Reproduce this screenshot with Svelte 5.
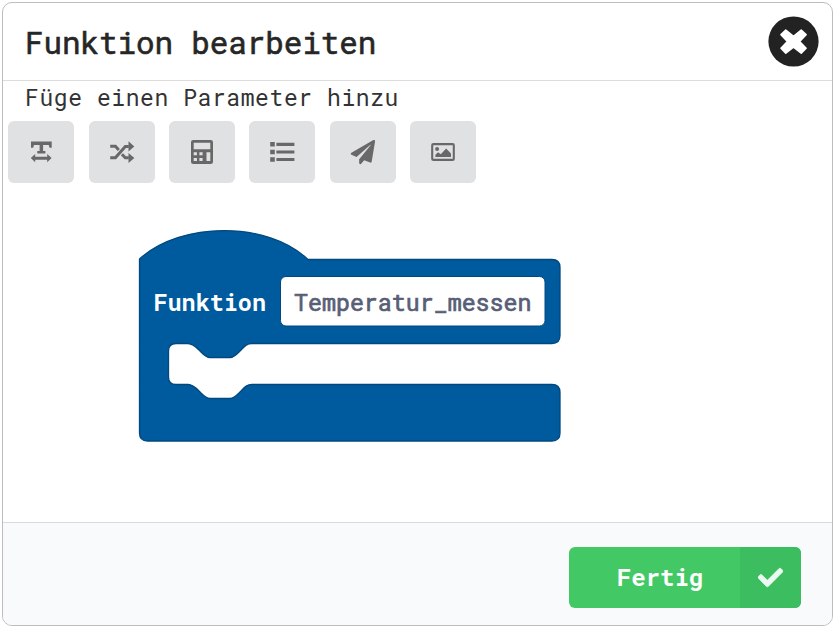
<script>
  const tools = ['text', 'random', 'calculator', 'list', 'plane', 'image'];
</script>

<div class="page">
  <section class="modal">
    <header>
      <h1>Funktion bearbeiten</h1>
      <button class="close" aria-label="Schließen">
        <svg width="51" height="51" viewBox="0 0 51 51">
          <circle cx="25.500" cy="25.500" r="25.100" fill="#222" />
          <path d="M17.800 14.100 25.500 20.300 33.200 14.100 38.100 18.700 31.600 25.500 38.100 32.300 33.200 37.200 25.500 31.100 17.800 37.200 13 32.300 19.400 25.500 13 18.700z" fill="#fff" stroke="#fff" stroke-width="1.600" stroke-linejoin="round" />
        </svg>
      </button>
    </header>

    <main>
      <p>Füge einen Parameter hinzu</p>
      <div class="tools">
        {#each tools as tool}
          <button class="tool" aria-label={tool}>
            <svg width="26" height="26" viewBox="0 0 26 26">
              {#if tool === 'text'}
                <path d="M3 2.500h20.700v6.300h-2.200L20.700 6h-5.600v6h2.300v2.500H9.300V12h2.300V6H6l-.8 2.800H3zM2.800 19.100 7.200 15v2.700h12V15l4.400 4.100-4.400 4.200v-2.600h-12v2.600z" />
              {:else if tool === 'random'}
                <path d="M1.200 7.200h5.200l3.400 3.700M1.200 18.800h5.200L16.300 7.500h3.500M12.900 15.300l3.400 3.500h3.500" class="line" />
                <path d="M19.500 2.300 25.300 7.500 19.500 12.500zM19.500 14l5.800 4.900-5.800 5z" />
              {:else if tool === 'calculator'}
                <path fill-rule="evenodd" d="M4.200 1h17.600q2.200 0 2.200 2.200v19.600q0 2.200-2.200 2.200H4.200Q2 25 2 22.800V3.200Q2 1 4.200 1zm.5 2.800v6.400h16.600V3.800zm0 9.500v3h3.200v-3zm5.700 0v3h3.200v-3zm-5.700 5.700v3h3.200v-3zm5.700 0v3h3.200v-3zm7.100-5.800V22h3.800v-8.800z" />
              {:else if tool === 'list'}
                <path d="M1.200 3h4.600v4.600H1.200zM1.200 10.700h4.600v4.600H1.200zM1.200 18.200h4.600v4.600H1.200zM7.400 3.800h18v3.100h-18zM7.400 11.400h18v3.100h-18zM7.400 18.900h18V22h-18z" />
              {:else if tool === 'plane'}
                <path transform="translate(.8 .9) scale(.0475)" d="M476 3.2 12.500 270.600c-18.100 10.400-15.800 35.600 2.200 43.200L121 358.400l287.300-253.200c5.500-4.900 13.300 2.600 8.600 8.300L176 407v80.500c0 23.600 28.500 32.900 42.500 15.800L282 426l124.600 52.200c14.200 6 30.400-2.900 33-18.200l72-432C515 7.800 493.300-6.800 476 3.200z" />
              {:else}
                <rect x="2.200" y="5.100" width="21.600" height="15.800" rx="1.200" fill="none" stroke="#686868" stroke-width="2.100" />
                <circle cx="7.100" cy="10" r="2" />
                <path d="M5.400 18.100v-2.300l2.700-2.600 2.700 2 5.300-5.800 4.900 5v3.700z" />
              {/if}
            </svg>
          </button>
        {/each}
      </div>

      <svg class="block" width="424" height="214" viewBox="138 229 424 214">
        <path
          d="M139.5 259C181 221 268 221 308 259.5H552Q560 259.5 560 267.5V335.500Q560 343.500 552 343.500H252C246 343.500 244 347 240 351C236 355 234 357.500 230 357.500H210C206 357.500 204 355 200 351C196 347 193 343.500 188 343.500H176Q168.500 343.500 168.500 351V377Q168.500 384.500 176 384.500H188C193 384.500 196 388 200 392C204 396 206 398.500 210 398.500H230C234 398.500 236 396 240 392C244 388 246 384.500 252 384.500H552Q560 384.500 560 392.500V433Q560 441 552 441H147.500Q139.500 441 139.500 433Z"
          fill="#005a9e" stroke="#00487e" stroke-width="1.3"
        />
        <rect x="280.5" y="276.500" width="264.500" height="49.500" rx="5.500" fill="#fff" stroke="#00487e" />
        <text x="153.500" y="310.500" fill="#fff" font-weight="700" textLength="112.500" lengthAdjust="spacingAndGlyphs">Funktion</text>
        <text x="294" y="310.500" fill="#575e75" stroke="#575e75" stroke-width=".7" textLength="237.500" lengthAdjust="spacingAndGlyphs">Temperatur_messen</text>
      </svg>
    </main>

    <footer>
      <button class="done">
        <span>Fertig</span>
        <i>
          <svg width="25" height="25" viewBox="0 0 512 512">
            <path fill="#eafaf0" stroke="#eafaf0" stroke-width="14" d="m173.898 439.404-166.400-166.400c-9.997-9.997-9.997-26.206 0-36.204l36.203-36.204c9.997-9.998 26.207-9.998 36.204 0L192 312.690 432.095 72.596c9.997-9.997 26.207-9.997 36.204 0l36.203 36.204c9.997 9.997 9.997 26.206 0 36.204l-294.400 294.401c-9.998 9.997-26.207 9.997-36.204-.001z" />
          </svg>
        </i>
      </button>
    </footer>
  </section>
</div>

<style>
  :global(body) {
    background: #fff;
  }
  .page {
    box-sizing: border-box;
    width: 835px;
    height: 628px;
    padding: 2px;
    font-family: 'Roboto Mono', 'DejaVu Sans Mono', monospace;
    overflow: hidden;
  }
  .modal {
    box-sizing: border-box;
    width: 831px;
    height: 624px;
    border: 1px solid #bdbdbd;
    border-radius: 10px;
    display: flex;
    flex-direction: column;
    overflow: hidden;
  }
  header {
    box-sizing: border-box;
    height: 78px;
    flex: none;
    display: flex;
    align-items: center;
    justify-content: space-between;
    padding: 0 13px 0 22px;
    border-bottom: 1px solid #dcdcdc;
  }
  h1 {
    margin: 0;
    font-size: 31px;
    font-weight: 400;
    line-height: 40px;
    letter-spacing: -0.12px;
    color: #262626;
    -webkit-text-stroke: 0.6px #262626;
    white-space: nowrap;
  }
  button {
    border: 0;
    padding: 0;
    font: inherit;
  }
  .close {
    background: none;
    display: flex;
  }
  main {
    flex: 1;
    display: flex;
    flex-direction: column;
  }
  p {
    margin: 1px 0 0 22px;
    height: 39px;
    line-height: 30px;
    font-size: 23px;
    letter-spacing: 0.58px;
    color: #333;
    white-space: nowrap;
  }
  .tools {
    display: flex;
    gap: 14.4px;
    margin-left: 5.15px;
  }
  .tool {
    width: 66px;
    height: 62px;
    border-radius: 6px;
    background: #e0e1e2;
    display: flex;
    align-items: center;
    justify-content: center;
    fill: #686868;
  }
  .line {
    fill: none;
    stroke: #686868;
    stroke-width: 3;
  }
  .block {
    margin: 46px 0 0 135px;
    font-size: 23px;
  }
  footer {
    box-sizing: border-box;
    flex: none;
    height: 103px;
    padding: 24px 31px 0 0;
    border-top: 1px solid #d8dadc;
    background: #f9fafc;
    display: flex;
    justify-content: flex-end;
    align-items: flex-start;
  }
  .done {
    width: 232px;
    height: 61px;
    border-radius: 6px;
    overflow: hidden;
    background: #42c966;
    color: #fff;
    display: flex;
    font-size: 24px;
    font-weight: 700;
  }
  .done span {
    flex: 1;
    line-height: 60px;
    padding-left: 11px;
  }
  .done i {
    width: 61px;
    height: 61px;
    background: #3cbd5f;
    display: flex;
    align-items: center;
    justify-content: center;
  }
</style>
